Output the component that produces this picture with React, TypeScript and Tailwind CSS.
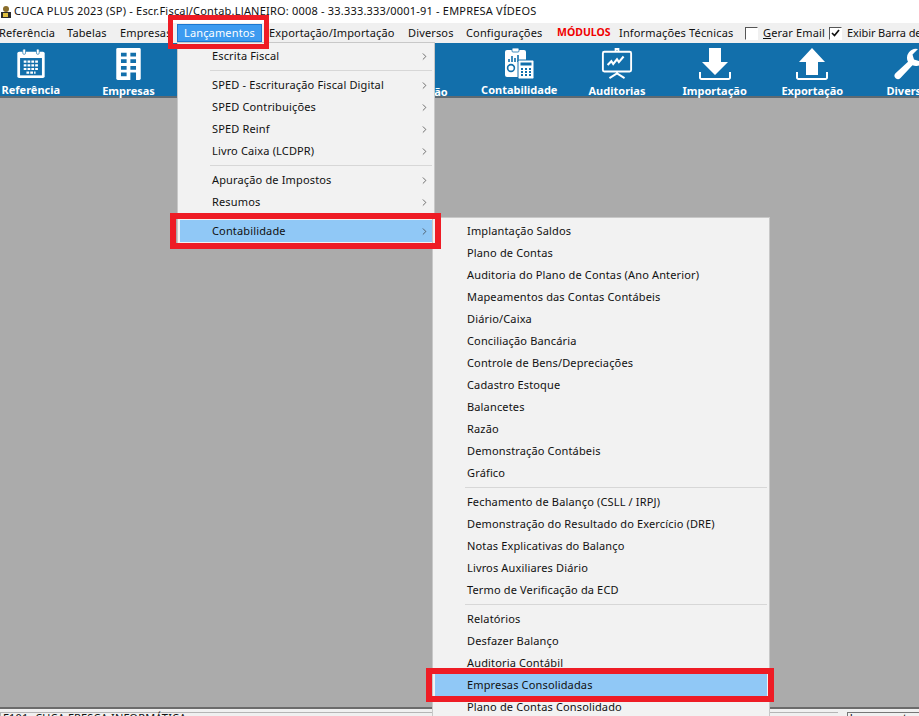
import { ChevronRight } from "lucide-react";
import clsx from "clsx";

const FONT = "font-['Noto_Sans',sans-serif]";

const firstMenu = [
  { label: "Escrita Fiscal", sub: true },
  null,
  { label: "SPED - Escrituração Fiscal Digital", sub: true },
  { label: "SPED Contribuições", sub: true },
  { label: "SPED Reinf", sub: true },
  { label: "Livro Caixa (LCDPR)", sub: true },
  null,
  { label: "Apuração de Impostos", sub: true },
  { label: "Resumos", sub: true },
  null,
  { label: "Contabilidade", sub: true, active: true },
];

const secondMenu = [
  { label: "Implantação Saldos" },
  { label: "Plano de Contas" },
  { label: "Auditoria do Plano de Contas (Ano Anterior)" },
  { label: "Mapeamentos das Contas Contábeis" },
  { label: "Diário/Caixa" },
  { label: "Conciliação Bancária" },
  { label: "Controle de Bens/Depreciações" },
  { label: "Cadastro Estoque" },
  { label: "Balancetes" },
  { label: "Razão" },
  { label: "Demonstração Contábeis" },
  { label: "Gráfico" },
  null,
  { label: "Fechamento de Balanço (CSLL / IRPJ)" },
  { label: "Demonstração do Resultado do Exercício (DRE)" },
  { label: "Notas Explicativas do Balanço" },
  { label: "Livros Auxiliares Diário" },
  { label: "Termo de Verificação da ECD" },
  null,
  { label: "Relatórios" },
  { label: "Desfazer Balanço" },
  { label: "Auditoria Contábil" },
  { label: "Empresas Consolidadas", active: true },
  { label: "Plano de Contas Consolidado" },
];

type Item = { label: string; sub?: boolean; active?: boolean } | null;

function MenuRows({ items }: { items: Item[] }) {
  return (
    <>
      {items.map((item, i) =>
        item === null ? (
          <div key={i} className="h-[7px] ml-[30px] flex items-center">
            <div className="h-px w-full bg-[#d7d7d7]" />
          </div>
        ) : (
          <div
            key={i}
            className={clsx(
              "h-[22px] flex items-center pl-[32px] pr-[2px] text-[11px] tracking-[0.15px] text-[#111]",
              item.active && "bg-[#90c8f6]"
            )}
          >
            <span className="flex-1 whitespace-nowrap">{item.label}</span>
            {item.sub && <ChevronRight size={11} strokeWidth={1.5} className="text-[#333]" />}
          </div>
        )
      )}
    </>
  );
}

function ToolIcon({ name }: { name: string }) {
  if (name === "calendar")
    return (
      <svg width="30" height="31" viewBox="0 0 32 34" fill="none">
        <rect x="1" y="4" width="30" height="29" rx="2" fill="#fff" />
        <rect x="4" y="11" width="24" height="19" fill="#126fab" />
        <rect x="7" y="1" width="3" height="6" rx="1.5" fill="#fff" stroke="#126fab" strokeWidth="0.7" />
        <rect x="22" y="1" width="3" height="6" rx="1.5" fill="#fff" stroke="#126fab" strokeWidth="0.7" />
        <path d="M8 15h16M8 19h16M8 23h16M11 27h10" stroke="#fff" strokeWidth="2.4" strokeDasharray="3 1.2" />
      </svg>
    );
  if (name === "building")
    return (
      <svg width="25" height="32" viewBox="0 0 26 34">
        <rect x="0" y="0" width="26" height="34" rx="1.5" fill="#fff" />
        <path d="M5 5h6v4H5zM15 5h6v4h-6zM5 12h6v4H5zM15 12h6v4h-6zM5 19h6v4H5zM15 19h6v4h-6zM5 26h6v4H5zM15 26h6v8h-6z" fill="#126fab" />
      </svg>
    );
  if (name === "accounting")
    return (
      <svg width="30" height="31" viewBox="0 0 30 31">
        <rect x="1" y="2" width="21" height="27" rx="2" fill="#fff" />
        <rect x="8" y="0" width="7" height="4" rx="1" fill="#fff" stroke="#126fab" strokeWidth="0.8" />
        <path d="M5 14V11M8 14V8M11 14V10M14 14V7" stroke="#126fab" strokeWidth="1.6" />
        <circle cx="7" cy="20" r="3.4" fill="none" stroke="#126fab" strokeWidth="1.6" />
        <rect x="14" y="12" width="16" height="19" rx="1.5" fill="#fff" stroke="#126fab" strokeWidth="1" />
        <rect x="16.5" y="14.5" width="11" height="3" fill="#126fab" />
        <path d="M17 21h2M21 21h2M25 21h2M17 24h2M21 24h2M25 24h2M17 27h2M21 27h2M25 27h2" stroke="#126fab" strokeWidth="2" />
      </svg>
    );
  if (name === "audit")
    return (
      <svg width="32" height="32" viewBox="0 0 34 32" fill="none">
        <rect x="2" y="3" width="30" height="21" rx="1.5" stroke="#fff" strokeWidth="2" />
        <path d="M15.500 3V0h3v3M17 24v3M17 26l-8 5M17 26l8 5" stroke="#fff" strokeWidth="2" />
        <path d="M7 17l4-4 2 3 4-5 2 3 5-6" stroke="#fff" strokeWidth="2.2" />
      </svg>
    );
  if (name === "import")
    return (
      <svg width="32" height="32" viewBox="0 0 32 32" fill="none">
        <path d="M10 0h12v14h7L16 27 3 14h7z" fill="#fff" />
        <path d="M1 24v5.500a1.500 1.500 0 0 0 1.500 1.500h27a1.500 1.500 0 0 0 1.500-1.500V24" stroke="#fff" strokeWidth="2" />
      </svg>
    );
  if (name === "export")
    return (
      <svg width="32" height="32" viewBox="0 0 32 32" fill="none">
        <path d="M16 0l13 14h-7v13H10V14H3z" fill="#fff" />
        <path d="M1 24v5.500a1.500 1.500 0 0 0 1.500 1.500h27a1.500 1.500 0 0 0 1.500-1.500V24" stroke="#fff" strokeWidth="2" />
      </svg>
    );
  if (name === "wrench")
    return (
      <svg width="34" height="32" viewBox="0 0 34 32">
        <path d="M32 9a9 9 0 0 1-12.500 8.300L7.500 30a3.400 3.400 0 0 1-5-4.700L15 13.800A9 9 0 0 1 25 1l-5.500 5.500 1.500 5 5 1.500z" fill="#fff" />
      </svg>
    );
  return <div className="h-[33px]" />;
}

const tools = [
  { label: "Referência", icon: "calendar" },
  { label: "Empresas", icon: "building" },
  { label: "", icon: "" },
  { label: "", icon: "" },
  { label: "Apuração", icon: "" },
  { label: "Contabilidade", icon: "accounting" },
  { label: "Auditorias", icon: "audit" },
  { label: "Importação", icon: "import" },
  { label: "Exportação", icon: "export" },
  { label: "Diversos", icon: "wrench" },
];

function CheckBox({ checked }: { checked?: boolean }) {
  return (
    <span className="w-[13px] h-[13px] border border-t-[#555] border-l-[#555] border-r-white border-b-white bg-white shrink-0 flex items-center justify-center">
      {checked && (
        <svg width="9" height="8" viewBox="0 0 9 8" fill="none">
          <path d="M1 4l2.500 2.500L8 1" stroke="#111" strokeWidth="1.700" />
        </svg>
      )}
    </span>
  );
}

export default function App() {
  return (
    <div className={clsx("relative w-[919px] h-[716px] overflow-hidden bg-[#ababab] flex flex-col", FONT)}>
      {/* title bar */}
      <div className="h-[23px] bg-white flex items-center gap-[2px] shrink-0">
        <svg width="12" height="14" viewBox="0 0 12 14" className="shrink-0">
          <circle cx="6" cy="4" r="3" fill="#8a6d2a" />
          <rect x="1" y="7" width="10" height="6" fill="#2b2b2b" />
          <rect x="3" y="8" width="5" height="4" fill="#e0c040" />
        </svg>
        <span className="text-[11px] tracking-[0.2px] text-[#111] whitespace-nowrap">
          CUCA PLUS 2023 (SP) - Escr.Fiscal/Contab.LJANEIRO: 0008 - 33.333.333/0001-91 - EMPRESA VÍDEOS
        </span>
      </div>

      {/* menu bar */}
      <div className="h-[20px] bg-[#f0f0f0] flex items-center text-[11px] tracking-[0.15px] text-[#111] whitespace-nowrap shrink-0">
        <span className="ml-[-1px] w-[68px] shrink-0">Referência</span>
        <span className="w-[53px] shrink-0">Tabelas</span>
        <span className="w-[57px] shrink-0">Empresas</span>
        <span className="w-[85px] mr-[1px] h-[18px] shrink-0 bg-[#3d9bf0] text-white flex items-center justify-center border border-[#1c78d0]">Lançamentos</span>
        <span className="ml-[6px] w-[139px] shrink-0">Exportação/Importação</span>
        <span className="w-[58px] shrink-0">Diversos</span>
        <span className="w-[91px] shrink-0">Configurações</span>
        <span className="w-[62px] shrink-0 font-bold text-[10.5px] text-[#f00000] tracking-normal">MÓDULOS</span>
        <span className="w-[126px] shrink-0">Informações Técnicas</span>
        <CheckBox />
        <span className="ml-[5px] w-[66px] shrink-0"><span className="underline">G</span>erar Email</span>
        <CheckBox checked />
        <span className="ml-[5px] shrink-0 tracking-[-0.1px]">Exibir Barra de</span>
      </div>

      {/* toolbar */}
      <div className="h-[55px] bg-[#126fab] border-b-2 border-[#5f6a72] flex shrink-0">
        <div className="flex ml-[-18px]">
          {tools.map((t, i) => (
            <div key={i} className="w-[97.700px] shrink-0 flex flex-col items-center pt-[5px]">
              <div className="h-[33px] flex items-center justify-center">
                <ToolIcon name={t.icon} />
              </div>
              <span className="mt-[5px] text-[11px] font-bold text-white leading-[12px] whitespace-nowrap">{t.label}</span>
            </div>
          ))}
        </div>
      </div>

      <div className="flex-1" />

      {/* status bar */}
      <div className="h-[9px] shrink-0 bg-[#f0f0f0] border-t-2 border-[#6b6b6b] flex overflow-hidden">
        <div className="w-[854px] mt-[3px] border-t border-l border-[#b5b5b5] pl-[2px] text-[11px] leading-[10px] tracking-[0.2px] text-[#111] whitespace-nowrap">
          F101- CUCA FRESCA INFORMÁTICA
        </div>
        <div className="ml-[9px] flex-1 mt-[3px] border-t border-l border-[#777] pl-[2px] text-[11px] leading-[10px] text-[#111] whitespace-nowrap">
          Lançamentos
        </div>
      </div>

      {/* open menus */}
      <div className="absolute left-[177px] top-[42px] w-[258px] bg-[#f2f2f2] border border-[#c8c8c8] px-[2px] pt-[2px] pb-[3px]">
        <MenuRows items={firstMenu} />
      </div>
      <div className="absolute left-[432px] top-[217px] w-[338px] bg-[#f2f2f2] border border-[#c8c8c8] px-[2px] pt-[2px]">
        <MenuRows items={secondMenu} />
      </div>

      {/* callouts */}
      <div className="absolute left-[168px] top-[15px] w-[101px] h-[34px] border-[5px] border-[#ee1c25]" />
      <div className="absolute left-[170px] top-[213px] w-[271px] h-[36px] border-[6px] border-[#ee1c25]" />
      <div className="absolute left-[426px] top-[668px] w-[348px] h-[34px] border-[6px] border-[#ee1c25]" />
    </div>
  );
}
